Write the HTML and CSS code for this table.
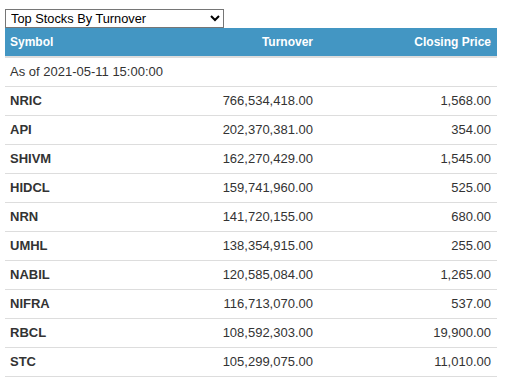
FILE: index.html
```html
<!DOCTYPE html>
<html>
<head>
<meta charset="utf-8">
<link rel="stylesheet" href="styles.css">
</head>
<body>
<div class="wrap">
  <select class="picker">
    <option>Top Stocks By Turnover</option>
    <option>Top Stocks By Volume</option>
  </select>
  <table class="stocks">
    <colgroup>
      <col class="c1"><col class="c2"><col class="c3">
    </colgroup>
    <thead>
      <tr><th class="left">Symbol</th><th class="right">Turnover</th><th class="right">Closing Price</th></tr>
    </thead>
    <tbody>
      <tr><td colspan="3" class="asof">As of 2021-05-11 15:00:00</td></tr>
      <tr><td class="sym">NRIC</td><td class="right">766,534,418.00</td><td class="right">1,568.00</td></tr>
      <tr><td class="sym">API</td><td class="right">202,370,381.00</td><td class="right">354.00</td></tr>
      <tr><td class="sym">SHIVM</td><td class="right">162,270,429.00</td><td class="right">1,545.00</td></tr>
      <tr><td class="sym">HIDCL</td><td class="right">159,741,960.00</td><td class="right">525.00</td></tr>
      <tr><td class="sym">NRN</td><td class="right">141,720,155.00</td><td class="right">680.00</td></tr>
      <tr><td class="sym">UMHL</td><td class="right">138,354,915.00</td><td class="right">255.00</td></tr>
      <tr><td class="sym">NABIL</td><td class="right">120,585,084.00</td><td class="right">1,265.00</td></tr>
      <tr><td class="sym">NIFRA</td><td class="right">116,713,070.00</td><td class="right">537.00</td></tr>
      <tr><td class="sym">RBCL</td><td class="right">108,592,303.00</td><td class="right">19,900.00</td></tr>
      <tr><td class="sym">STC</td><td class="right">105,299,075.00</td><td class="right">11,010.00</td></tr>
    </tbody>
  </table>
</div>
</body>
</html>
```
FILE: styles.css
```css
html, body {
  margin: 0;
  padding: 0;
  background: #fff;
}
body {
  font-family: "Liberation Sans", Arial, sans-serif;
  font-size: 13px;
  color: #333;
}
.wrap {
  padding: 9px 0 0 5px;
  width: 492px;
}
.picker {
  display: block;
  width: 219px;
  height: 19px;
  margin: 0;
  font-family: "Liberation Sans", Arial, sans-serif;
  font-size: 12.8px;
  color: #000;
  border: 1px solid #767676;
  border-radius: 0;
  background: #fff;
  padding: 0 0 0 1px;
}
.stocks {
  width: 492px;
  border-collapse: collapse;
  border-spacing: 0;
  table-layout: fixed;
}
.c1 { width: 130px; }
.c2 { width: 184px; }
.c3 { width: 178px; }
.stocks th {
  background: #4396c3;
  color: #fff;
  font-size: 12px;
  font-weight: bold;
  line-height: 20px;
  padding: 4px 6px 4px 5px;
  border-bottom: 2px solid #ddd;
}
.stocks td {
  line-height: 20px;
  padding: 4px 6px 4px 5px;
  border-top: 1px solid #ddd;
  white-space: nowrap;
}
.stocks tbody tr:last-child td {
  border-bottom: 1px solid #ddd;
}
.left { text-align: left; }
.right { text-align: right; }
.sym { font-weight: bold; }
.asof { text-align: left; }
```
